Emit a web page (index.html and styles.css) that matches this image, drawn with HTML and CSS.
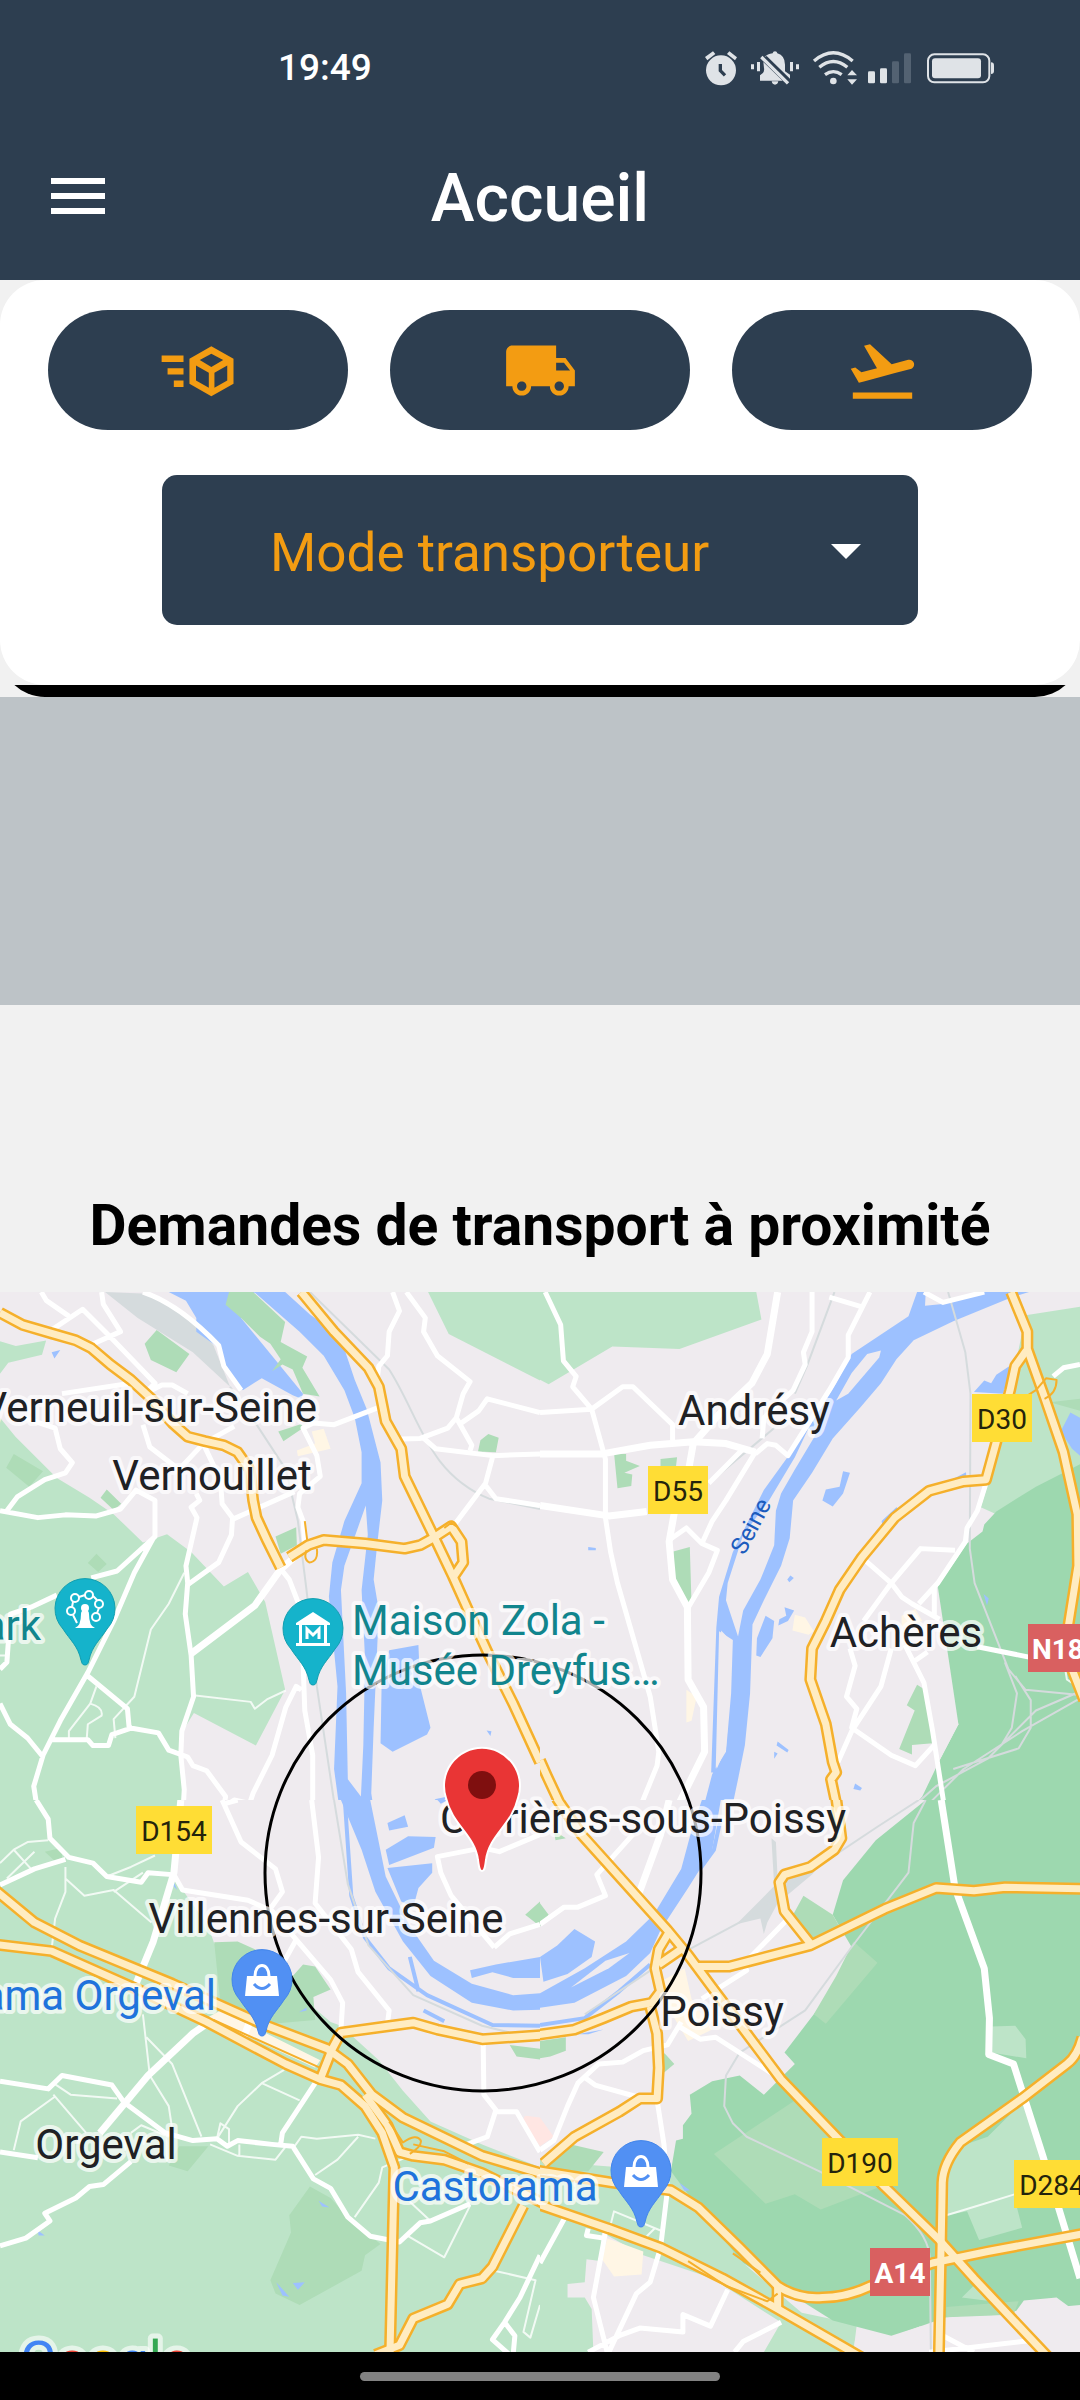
FILE: index.html
```html
<!DOCTYPE html>
<html lang="fr">
<head>
<meta charset="utf-8">
<meta name="viewport" content="width=device-width, initial-scale=1">
<title>Accueil</title>
<link rel="stylesheet" href="styles.css">
</head>
<body>
<header class="header">
  <div class="status">
    <span class="clock">19:49</span>
    <svg class="status-icons" viewBox="130 80 880 120" aria-hidden="true">
      <g class="st-fill">
        <circle cx="183" cy="147" r="45"/>
        <path d="M135 107L159 90L166 98L142 117ZM208 90L231 108L225 117L201 98Z"/>
        <path d="M273 129h9v15h-9zM291 122h9v28h-9zM390 122h9v28h-9zM408 129h9v15h-9z"/>
        <path d="M313 108Q322 98 338 96Q339 90 345 90Q351 90 352 96Q375 103 375 130V150L390 160V172L320 104ZM310 122L368 178H300V162Q315 155 312 140ZM335 180H355Q353 190 345 190Q337 190 335 180Z"/>
        <circle cx="520" cy="179" r="10"/>
        <path d="M562 162L576 146L591 162ZM562 174H591L576 190Z"/>
        <rect x="624" y="150" width="21" height="36" rx="4"/>
        <rect x="660" y="141" width="21" height="45" rx="4"/>
        <rect x="816" y="111" width="147" height="60" rx="9"/>
        <path d="M993 123Q1002 123 1002 132V149Q1002 158 993 158Z"/>
      </g>
      <g class="st-dim">
        <rect x="696" y="120" width="21" height="66" rx="4"/>
        <rect x="732" y="96" width="21" height="90" rx="4"/>
      </g>
      <path class="st-cut" d="M181 128V148L195 162"/>
      <path class="st-line" d="M304 107L384 186"/>
      <path class="st-line" d="M462 119Q520 70 578 119M478 138Q520 103 562 138M495 160Q520 142 545 160"/>
      <rect class="st-line thin" x="804" y="99" width="184" height="84" rx="19"/>
    </svg>
  </div>
  <div class="titlebar">
    <button class="menu" aria-label="Menu"><svg viewBox="0 0 54 36"><path d="M0 0H54V6H0ZM0 15H54V21H0ZM0 30H54V36H0Z"/></svg></button>
    <h1 class="title">Accueil</h1>
  </div>
</header>

<main>
  <section class="card">
    <div class="actions">
      <button class="action" aria-label="Colis"><svg viewBox="0 0 24 24"><path fill-rule="evenodd" d="M16.1 4.2L23.2 8.2V16.2L16.1 20.2L9.1 16.2V8.2ZM12.4 8.6L16.1 10.9L19.9 8.6L16.1 6.6ZM11.2 10.4V15.2L15.3 17.5V12.7ZM21.2 10.4L17.1 12.7V17.5L21.2 15.2ZM.2 7.2H7.2V9.3H.2ZM2.1 11.3H7.2V13.3H2.1ZM4.1 15.2H7.2V17.3H4.1Z"/></svg></button>
      <button class="action" aria-label="Camion"><svg viewBox="0 0 24 24"><path d="M18 18.5C18.83 18.5 19.5 17.83 19.5 17C19.5 16.17 18.83 15.5 18 15.5C17.17 15.5 16.5 16.17 16.5 17C16.5 17.83 17.17 18.5 18 18.5M19.5 9.5H17V12H21.46L19.5 9.5M6 18.5C6.83 18.5 7.5 17.83 7.5 17C7.5 16.17 6.83 15.5 6 15.5C5.17 15.5 4.5 16.17 4.5 17C4.5 17.83 5.17 18.5 6 18.5M20 8L23 12V17H21C21 18.66 19.66 20 18 20C16.34 20 15 18.66 15 17H9C9 18.66 7.66 20 6 20C4.34 20 3 18.66 3 17H1V6C1 4.89 1.89 4 3 4H17V8H20Z"/></svg></button>
      <button class="action" aria-label="Avion"><svg viewBox="0 0 24 24"><path d="M2.5,19H21.5V21H2.5V19M22.07,9.64C21.86,8.84 21.03,8.36 20.23,8.58L14.92,10L8,3.57L6.09,4.08L10.23,11.25L5.26,12.58L3.29,11.04L1.84,11.43L3.66,14.59L4.43,15.92L6.03,15.5L11.34,14.07L15.69,12.91L21,11.5C21.81,11.26 22.28,10.44 22.07,9.64Z"/></svg></button>
    </div>
    <div class="mode">
      <select class="mode-select" aria-label="Mode"><option>Mode transporteur</option></select>
      <svg class="mode-arrow" viewBox="0 0 30 15" aria-hidden="true"><path d="M0 0H30L15 15Z"/></svg>
    </div>
  </section>
  <div class="card-edge"><div class="card-edge-bar"></div></div>
  <div class="banner"></div>

  <h2 class="heading">Demandes de transport à proximité</h2>

  <svg class="map" viewBox="0 0 1080 1060" role="img" aria-label="Carte des demandes à proximité">
    <defs>
      <g id="roads-nw">
        <path d="M0 95L65 130L150 155L220 175L265 198L320 245L380 290L440 345L500 415L545 455L595 468L650 480L690 500L725 550L735 640L745 690L775 755L815 835"/>
        <path d="M875 35L970 150L1070 255L1100 310L1120 410L1165 490L1175 570L1260 745L1315 860L1360 960L1420 1090L1490 1230L1568 1400"/>
        <path d="M840 805L895 770L940 755L1060 765L1175 780L1220 770L1260 748L1310 715L1340 760L1345 820L1318 860"/>
      </g>
      <g id="roads-ne">
        <path d="M1368 35L1415 150L1415 200L1465 340L1520 500L1560 680L1562 830L1535 1000L1545 1130L1580 1220"/>
        <path d="M1412 205L1380 250L1365 320L1325 470L1295 580L1230 585L1130 612L1030 690L935 805L870 900L830 990L790 1070L785 1160L830 1290L850 1400L860 1430L845 1450L870 1568"/>
        <path d="M0 1395L20 1440L80 1568"/>
      </g>
      <g id="roads-sw">
        <path d="M-10 238L100 320L230 380L500 480L760 585L950 650L1010 690L1080 770L1170 830L1400 930L1580 978"/>
        <path d="M-10 378L150 395L400 495L600 580L830 690L930 730L990 745L1060 800L1110 870L1145 960L1140 1150L1132 1460"/>
        <path d="M930 730L965 650L990 608L1120 592L1200 582L1270 600L1400 625L1580 614"/>
        <path d="M1060 770L1125 850L1160 920L1200 930L1290 940L1400 975L1580 1055"/>
        <path d="M1520 1060L1430 1220L1400 1250L1335 1265L1300 1318L1200 1355L1160 1425L1090 1450"/>
      </g>
      <g id="roads-se">
        <path d="M48 -5L120 90L280 250L370 340L430 405L500 490L600 610L700 730L860 880L1000 1010L1160 1150L1260 1250L1480 1460"/>
        <path d="M860 -5L875 100L855 130L785 175L710 195L695 215L710 290L785 375"/>
        <path d="M455 435L550 435L785 380L1000 285L1150 230L1260 237L1350 228L1580 232"/>
        <path d="M375 345L345 390L335 440L350 500L325 530L265 540L185 570L100 600L-10 614"/>
        <path d="M410 390L345 430"/>
        <path d="M320 540L340 610L345 700L340 780L290 780L230 815L100 880L10 950"/>
        <path d="M-10 968L210 1000L380 1020L460 1065L580 1170L690 1270Q750 1305 820 1300Q890 1300 960 1270L1140 1210L1300 1180L1580 1133"/>
        <path d="M-10 1055L200 1120L350 1170L530 1250L690 1330L940 1460"/>
        <path d="M690 1270V1330"/>
        <path d="M1575 620Q1560 670 1530 690L1400 780L1220 895Q1170 950 1168 1000L1165 1150L1158 1460"/>
      </g>
      <path id="pin" d="M0 57C-3 57 -3 55 -4 52C-7 38 -15 32 -22 21A30 30 0 1 1 22 21C15 32 7 38 4 52C3 55 3 57 0 57Z"/>
      <g id="bag">
        <path class="icon-white" d="M-15 -3H15L17 17H-17Z"/>
        <path class="bag-handle" d="M-7 -3C-7 -17 7 -17 7 -3"/>
        <path class="bag-smile" d="M-8 5Q0 14 8 5"/>
      </g>
    </defs>

    <rect class="land" width="1080" height="1060"/>

    <!-- North-west -->
    <svg x="0" y="-12" width="540" height="540" viewBox="0 0 1568 1568" preserveAspectRatio="none">
      <path class="park" d="M1243 35L1303 157L1580 298V35ZM0 178L46 192L134 176L122 217L24 240L0 272ZM0 400L45 455L165 575L260 632L330 680L415 762L485 738L555 790L650 890L720 848L770 935L828 1190L743 1352L563 1257L530 1310V1568H0Z"/>
      <path class="grove" d="M455 145L550 215L512 268L438 232L420 185ZM808 440L875 418L880 430L823 468ZM800 745L860 718L862 770L815 795ZM1418 447L1448 458L1440 500L1388 498L1395 465ZM40 505L125 555L85 600L18 545ZM310 608L352 650L330 668L292 632ZM280 795L310 825L285 848L255 822Z"/>
      <path class="rail-yard" d="M305 35L430 40L560 120L620 190L668 310L560 210L400 110Z"/>
      <path class="water" d="M490 35H740L700 110L880 330L875 345L850 335L760 285L705 320L650 240L640 200L570 150V110L540 60Z"/>
      <path class="grove" d="M665 35H735L828 122L815 180L892 222L878 255L928 338L880 330L850 260L820 245L790 265L815 230L785 185L755 165L700 110L655 72Z"/>
      <path class="water" d="M738 35H828L900 100L970 150L1000 200L1030 290L1065 375L1105 530L1110 640L1095 770L1085 870L1100 960L1085 1300L1078 1490L1090 1568H990L970 1420L975 1300L980 1180L955 920L965 820L1000 700L1050 590V500L1030 400L1000 320L940 220L870 150Z"/>
      <path class="land" d="M1062 655L1068 740L1050 900L1060 1100L1055 1350L1048 1500L1010 1450L1005 1200L990 900L1000 830Z"/>
      <path class="water" d="M1130 1075L1215 1060L1220 1180L1250 1300L1240 1320L1140 1370L1105 1345L1108 1180ZM150 210L175 203L158 228ZM1413 1308L1427 1310L1424 1324ZM1262 1508L1300 1500L1280 1520Z"/>
      <path class="beige" d="M905 440L940 432L960 490L865 512L862 495L915 475Z"/>
      <path class="rail" d="M900 35L1130 260C1220 400 1240 560 1420 635L1568 665M668 310L745 420L830 550L865 700L890 900L920 1180L978 1568"/>
      <path class="lane" d="M0 1090L20 1090M555 1205L728 1225L740 1245L775 1218L830 1192M535 850L490 940L438 1015L390 1210L330 1275L335 1330M280 1180L262 1230L200 1310V1330M262 1230Q300 1240 295 1265L255 1290L252 1330"/>
      <path class="street" d="M120 35L135 60L200 105M150 145L240 85L315 160L450 300L420 330M260 190L350 150L300 70L295 35M415 35Q520 70 635 190L650 250L700 320M180 330L380 300M420 330L470 305H500L545 330M415 420L435 485L520 550L590 475L680 425M70 400L160 430L175 490L210 530L190 560L130 580L50 630L20 670M0 670L110 690L190 682L280 685L350 665L395 610L450 640V745L340 845L265 865M445 750L390 850L330 990L255 1140L175 1280L125 1380L98 1470L105 1515L140 1568M570 620L580 640L555 660L572 690L540 830L545 880L538 970L555 1090L562 1210L528 1310L525 1380L535 1480L530 1568M545 885L635 820L672 740L675 695L855 615M590 475L640 580L645 650L675 690M865 935L840 870L820 845M165 915L90 950L30 970L20 1110L0 1130M0 1230L30 1290L80 1330L125 1385M255 1150L370 1245L375 1300L460 1315L490 1365L545 1385L560 1410L600 1425L655 1500L650 1530L680 1510L725 1520L735 1490L790 1380L830 1240L860 1180L875 1190M885 770L880 700L865 660L870 620L930 570L920 510L880 430L910 415L970 420L1100 370M868 930L880 1110L885 1250L908 1380V1568M1140 35L1160 90L1130 150L1125 220L1100 250L1095 290M1180 35L1235 110L1230 150L1270 220L1365 295L1345 330L1325 400L1300 430L1220 460L1165 462M1225 455L1265 490L1430 510L1568 505M1325 400L1370 480L1365 495M1340 415L1390 380L1415 345L1568 385M1430 515L1410 590L1320 710M1405 590L1440 635L1568 655M150 1335L255 1335L270 1352H315L325 1320L385 1300"/>
      <path class="street wide" d="M895 770L815 840L740 945L555 1085"/>
      <use class="casing" href="#roads-nw"/>
      <use class="road" href="#roads-nw"/>
      <path class="ramp" d="M885 700L892 755M890 785Q880 810 898 820Q925 818 920 780M1290 720L1310 705L1325 715"/>
    </svg>

    <!-- North-east -->
    <svg x="540" y="-12" width="540" height="540" viewBox="0 0 1568 1568" preserveAspectRatio="none">
      <path class="park" d="M0 35H628L643 115L405 200L210 193L25 303L0 290ZM1410 102L1568 78V560L1325 680L1280 660L1310 560L1370 300Z"/>
      <path class="forest" d="M1568 535L1440 600L1325 672L1290 710L1285 730L1240 765L1155 890L1165 1150L1215 1290L1160 1395L1110 1500L1050 1568H1568Z"/>
      <path class="land" d="M1155 890L1215 1290L1160 1395L1130 1150Z"/>
      <path class="grove" d="M215 503L250 505V525L290 540L245 560L268 565L265 598L225 605ZM350 520L398 515L395 540H350ZM387 788L435 775L440 940L425 950L390 870ZM1095 1175L1118 1190L1140 1345L1080 1350V1378L1043 1362L1088 1250L1065 1235ZM1568 380L1480 355L1568 345Z"/>
      <path class="water" d="M1095 35H1120L1118 75L1170 70L1290 35H1420L1370 50L1200 120L1085 175L1035 230L990 300L930 370L850 460L790 560L735 640L725 750L700 830L650 930L617 1000L610 1200L595 1350L575 1450L550 1568H465L500 1435L540 1370L555 1200L560 1045L520 1020L510 1430H497L512 1010L520 920L560 790L650 610L715 520L780 430L860 300L905 215L1070 105Z"/>
      <path class="land" d="M990 205L950 215L905 270L860 350L895 330L985 225ZM780 430L740 515L665 640L590 740L545 880L540 930L575 1035L590 960L640 870L680 770L685 670L700 620L740 550L800 450ZM526 1018L552 1045V1200L540 1360L513 1420Z"/>
      <path class="water" d="M880 555L900 560L880 620L850 658L820 640L830 608L870 600ZM655 975L680 990L675 1040L640 1095L628 1090L630 1040ZM710 950L738 960L720 990L692 1003L695 985L715 975ZM1035 660L1048 670L995 720L992 700ZM1540 385L1568 400V510L1545 490L1512 440ZM1370 245L1345 330L1260 325L1290 292L1310 300L1325 275ZM727 858L737 865L724 878L718 870ZM690 1340L722 1365L718 1372L687 1352ZM680 1370L690 1375L680 1390ZM915 1462L935 1475L930 1482L910 1478ZM1195 580L1237 558L1238 575ZM140 775L162 778V785H140ZM1288 912L1303 925L1298 945Z"/>
      <path class="beige" d="M740 972L770 980L795 1020L780 1030L733 1018ZM425 1190L455 1210L440 1280L425 1285ZM1050 975L1090 955L1110 990L1050 1010Z"/>
      <path class="rail" d="M855 35L775 250L740 330M680 430L490 590M1185 35L1235 210L1250 330L1248 780L1262 880L1360 1130L1410 1190L1568 1205M1350 1110L1385 1200L1370 1300L1340 1350M1380 1150L1425 1220V1300L1390 1360L1200 1420M1568 1195L1440 1250L1300 1390L1150 1470L1040 1568M1568 1215L1400 1310L1230 1420L1120 1530"/>
      <path class="lane" d="M1525 1130L1530 1160L1545 1170"/>
      <path class="street" d="M15 35L60 130L68 235L105 280L95 310L150 375L190 520V690L205 790L225 880L320 1210L345 1370L340 1410L295 1520L280 1568M790 35V150L765 210L770 245L735 320L650 400L645 460M958 35L895 160V225L840 320L720 510L685 480L660 475L625 505M0 385L150 375L240 310H270L385 420V465M428 955L490 850L515 785L470 765L425 720L375 755M625 500L540 640L500 700L470 765M840 50L935 78M1115 35L1170 65L1290 35M945 815L1020 880L1050 920L1080 940L1160 985M1295 590L1270 670L1240 720L1235 760L1155 880L1100 940M1205 785L1105 780L1020 880L940 990M900 1070L915 1120L890 1210L920 1245L905 1300L1020 1380L1090 1410L1145 1350M865 1400L905 1310L990 1180L1020 1070M1145 890V980M1125 1080L1090 1105M1060 1060L1115 1170L1140 1310L1180 1568M1270 1065L1420 1095M1490 280L1520 255L1568 245M490 590L590 490"/>
      <path class="street wide" d="M690 35L660 215L615 300L520 390L445 475L430 560L400 620L375 760L385 870L428 950L430 1160L475 1240L478 1370L380 1568M0 505H180L320 480L445 470L540 475L625 500M0 655L200 685L310 672"/>
      <use class="casing" href="#roads-ne"/>
      <use class="road" href="#roads-ne"/>
      <path class="ramp" d="M1400 345L1440 320L1470 285L1500 290Q1500 330 1465 345"/>
    </svg>

    <!-- South-west -->
    <svg x="0" y="508" width="540" height="600" viewBox="0 0 1568 1568" preserveAspectRatio="none">
      <rect class="land" width="1568" height="1568"/>
      <path class="park" d="M0 0H530L505 190L530 235L605 330L622 375L830 480L960 580L990 590L1100 680L1170 760L1250 840L1400 900L1568 960V1568H0Z"/>
      <path class="grove" d="M622 372L690 370L740 390L830 480L880 430L915 435L960 495L910 515L915 575L790 585L640 530ZM900 1010L960 1040L1020 1100L1105 1160L1060 1190L1050 1230L870 1320L800 1290L785 1255L845 1130L840 1085ZM520 905H605L545 970L490 955ZM1480 640L1568 650V678L1500 670ZM1525 300L1568 265V330ZM130 135L180 125V150L160 160Z"/>
      <path class="water" d="M990 0H1075L1120 200L1190 330L1260 420L1370 480L1490 510L1568 505V548L1490 550L1370 530L1250 460L1170 370L1090 240L1050 130ZM1120 130L1185 95L1265 97L1260 125L1130 170ZM1125 178L1255 165V190L1215 230L1200 280L1165 265ZM1125 60L1175 40L1185 70L1130 80ZM1365 445L1440 430L1568 410V465L1490 465L1430 450L1370 465ZM500 205L515 235L503 225ZM868 555L890 542V550ZM925 1047L957 1065L935 1062ZM802 1260L840 1298L820 1295ZM850 1262L885 1260L865 1280ZM110 1125L130 1138H112ZM1270 0H1300L1280 10Z"/>
      <path class="stream" d="M1002 10L1020 250L1060 360L1130 440L1240 510L1430 588L1568 590M1190 410L1215 500M1230 550L1290 578"/>
      <path class="rail" d="M970 0L1010 220L1070 380L1200 510L1400 590L1490 610"/>
      <path class="beige" d="M600 570L640 550L930 680L915 700L700 610Z"/>
      <path class="clinic" d="M1568 830L1525 825L1515 840L1568 905Z"/>
      <path class="lane" d="M0 165L40 130L80 110L140 105M40 130L90 180M20 205L100 135M190 175V240L160 310L150 390M190 205L245 250L330 235L440 320M310 200L380 175L450 145M330 240L415 190M415 560L435 720L490 800L500 860M425 620L500 690L585 880M155 740L205 770L340 780M155 770L250 870M160 775L60 840L40 915M825 705L760 740L690 800L630 885L640 845L665 860V900M760 740L870 785M855 905L875 880L920 885L1040 875L1090 885M1040 880L980 940L915 980M610 900L690 930L800 940L830 905M695 900V930M1030 1090L1100 1000L1110 960L1190 930M1185 1140L1290 1195L1365 1060M1190 1050L1250 1100M1435 1230L1555 1255L1520 1390L1540 1405L1568 1320M380 870L410 850L490 880"/>
      <path class="street" d="M105 0L140 50L145 100L200 150L270 165L310 200L410 215L430 190L500 195M0 222L100 180L190 155M505 195L530 235L720 262L790 290L860 365L960 470L995 530L990 600M645 0L700 110L800 180L820 240L780 290M650 10L690 0M905 0L925 150L915 270L1020 390L1040 450L1130 550L1125 585M860 365L820 430M0 735L140 755L180 720L325 745L360 790L480 870L560 890L630 885L660 905L690 890L790 900L850 905L910 990L960 1015L1010 1090L1075 1140L1160 1155L1220 1105L1250 1100L1365 1055M0 920L110 935M0 1165L75 1145L145 1100L130 1080L220 1040L260 1010L300 1005L380 945M915 740L820 870L815 900M1403 630L1405 770L1440 810L1415 880L1340 905M1440 815H1500L1568 920M1435 385L1480 350L1568 325M1568 90L1450 135L1400 125L1270 148L1280 190L1310 250L1435 385M1568 1190L1510 1300L1465 1365L1430 1410L1480 1450M1465 1365L1495 1400L1490 1450"/>
      <path class="street wide" d="M525 0L505 190L445 370L395 480M600 585L560 610L430 720L290 870M725 580L705 625"/>
      <use class="casing" href="#roads-sw"/>
      <use class="road" href="#roads-sw"/>
      <path class="ramp" d="M1130 840L1170 895Q1210 870 1222 890Q1225 905 1190 925M1200 900L1290 918L1360 950M620 575L930 700"/>
    </svg>

    <!-- South-east -->
    <svg x="540" y="508" width="540" height="600" viewBox="0 0 1568 1568" preserveAspectRatio="none">
      <rect class="land" width="1568" height="1568"/>
      <path class="park" d="M0 940L90 950L380 970L470 1060L590 1210L760 1340L920 1370L910 1443H0Z"/>
      <path class="land" d="M180 1130L300 1190L500 1250L700 1365L650 1443H155L150 1330L130 1300H80V1265L130 1260L135 1200L175 1205Z"/>
      <path class="forest" d="M1120 0L975 105L880 210L850 300L915 400L830 520L795 560L710 660L740 690L650 770L580 720L500 735L435 770L440 820L415 850V885L395 890L380 970L480 1090L590 1210L690 1270L850 1360L1020 1400L1105 1375L1180 1352L1568 1320V0Z"/>
      <path class="grove" d="M730 308L765 250L850 300L875 340L800 370ZM505 925L740 785L820 850L990 1010L815 1070L740 1030L655 1055ZM910 370L980 425L830 585L795 560L860 460ZM90 900L185 920L140 970L0 970L60 920ZM0 630L75 620V655L30 670L0 675ZM345 650L365 665L390 690L350 720ZM0 270L25 300L0 330ZM1180 1325L1390 1310L1375 1345L1180 1352ZM40 80L75 100L45 105Z"/>
      <path class="park" d="M1310 592L1380 590L1410 625L1412 675L1310 660ZM1220 905L1300 880L1400 790L1470 940L1568 1090V1110L1180 1170L1175 990ZM1225 1300L1270 1260L1310 1310Z"/>
      <path class="forest" d="M1180 1085L1240 1075L1275 1150L1400 1118L1375 1030L1568 990V1140L1180 1190Z"/>
      <path class="land" d="M1180 1355L1375 1345L1405 1308L1500 1300L1568 1345V1443H910L915 1410L1025 1402L1105 1375L1115 1402H1170Z"/>
      <path class="water" d="M470 0H525L500 130L430 230L350 340L320 400L250 460L100 530L0 543V505L130 440L250 370L330 300L410 180L440 80ZM0 410L50 380L100 337L160 370L150 410L80 455L10 475ZM108 612L185 600L140 612ZM405 1000L435 1020L420 1022Z"/>
      <path class="land" d="M90 490L190 420L260 400L200 440Z"/>
      <path class="stream" d="M0 588L130 570L230 500L320 430M522 60L505 130L465 180"/>
      <path class="rail-yard" d="M850 130L790 195L690 270L660 320L650 350L640 310L570 325L680 225L672 100L685 110L690 205Z"/>
      <path class="rail" d="M1100 0L980 70L780 190L600 310L330 440L130 560M1120 0L1085 60L1070 190L900 390L770 550L580 660L540 720L535 800L560 845L600 880L810 970L1060 1085Q1130 1140 1132 1200L1135 1443"/>
      <path class="beige" d="M360 470L420 440L440 520L500 600L430 630L370 540ZM195 1145L300 1180L295 1240L215 1245L180 1200Z"/>
      <path class="clinic" d="M0 830L40 880L0 905Z"/>
      <path class="lane" d="M1180 1085L1290 1055L1380 1030M205 1110L215 1075L350 1125M310 1140L335 1118"/>
      <path class="street" d="M270 90L165 195L190 250L110 280H70L0 325M715 315L590 430L600 445L470 520M410 580L370 640L300 655L240 685L170 690L110 740L80 800L40 890L0 915M130 725L160 745L300 780M340 785L360 900L370 1020L350 1170L320 1260L280 1290L200 1443M400 590L465 625L510 620L700 730M70 1095L0 1210M190 1130L155 1300L195 1443M185 1145L135 1138L140 1120M545 1280L495 1375L415 1345V1390L290 1380L230 1400L140 1443M700 1365L590 1415L565 1443M1170 1400L1260 1443M1130 1443L1430 1412"/>
      <path class="street wide" d="M375 0L350 90L285 250M1165 0L1205 230L1290 440L1305 570L1303 665L1375 690L1460 930L1568 1250"/>
      <use class="casing" href="#roads-se"/>
      <use class="road" href="#roads-se"/>
      <path class="ramp" d="M430 1205L540 1270L660 1310L690 1290M560 1185L640 1235"/>
    </svg>

    <circle class="radius" cx="483" cy="581" r="218"/>

    <g class="place">
      <text x="317" y="130" text-anchor="end">Verneuil-sur-Seine</text>
      <text x="212" y="198" text-anchor="middle">Vernouillet</text>
      <text x="754" y="133" text-anchor="middle">Andrésy</text>
      <text x="906" y="355" text-anchor="middle">Achères</text>
      <text x="643" y="541" text-anchor="middle">Carrières-sous-Poissy</text>
      <text x="326" y="641" text-anchor="middle">Villennes-sur-Seine</text>
      <text x="722" y="734" text-anchor="middle">Poissy</text>
      <text x="106" y="867" text-anchor="middle">Orgeval</text>
    </g>
    <g class="place sight">
      <text x="41" y="348" text-anchor="end">Park</text>
      <text x="352" y="343">Maison Zola -</text>
      <text x="352" y="393">Musée Dreyfus…</text>
    </g>
    <g class="place shop">
      <text x="216" y="718" text-anchor="end">Castorama Orgeval</text>
      <text x="495" y="909" text-anchor="middle">Castorama</text>
    </g>
    <text class="river-name" text-anchor="middle" transform="translate(758 238) rotate(-62)">Seine</text>

    <g class="shield">
      <rect x="648" y="174" width="60" height="48"/><text x="678" y="209">D55</text>
      <rect x="972" y="102" width="60" height="48"/><text x="1002" y="137">D30</text>
      <rect x="136" y="514" width="76" height="48"/><text x="174" y="549">D154</text>
      <rect x="822" y="846" width="76" height="48"/><text x="860" y="881">D190</text>
      <rect x="1014" y="868" width="76" height="48"/><text x="1052" y="903">D284</text>
    </g>
    <g class="shield red">
      <rect x="1028" y="332" width="76" height="48"/><text x="1066" y="367">N184</text>
      <rect x="870" y="956" width="60" height="48"/><text x="900" y="991">A14</text>
    </g>

    <g class="pin-sight" transform="translate(85 316)">
      <use href="#pin"/>
      <path class="icon-white" d="M-10 20Q-4 18 -4 6A4 4 0 1 1 4 6Q4 18 10 20Z"/>
      <circle class="icon-white" cy="0" r="4"/>
      <g class="wheel"><circle cx="-14" cy="3" r="4"/><circle cx="-10" cy="-10" r="4"/><circle cx="4" cy="-13" r="4"/><circle cx="14" cy="-4" r="4"/><circle cx="11" cy="9" r="4"/><path d="M-13 -1L-12 -6M-6 -11L0 -13M8 -12L12 -8M14 0L12 5M-12 7L-8 15"/></g>
    </g>
    <g class="pin-sight" transform="translate(313 336)">
      <use href="#pin"/>
      <path class="icon-white" d="M0 -16L17 -5V-3H-17V-5ZM-14 -3H-11V15H-14ZM11 -3H14V15H11ZM-17 15H17V18H-17Z"/>
      <path class="museum-m" d="M-6 11V1L0 7L6 1V11"/>
    </g>
    <g class="pin-shop" transform="translate(262 687)"><use href="#pin"/><use href="#bag"/></g>
    <g class="pin-shop" transform="translate(641 878)"><use href="#pin"/><use href="#bag"/></g>

    <g transform="translate(482 493)">
      <path class="marker" d="M0 86C-3 86 -3 81 -4 75C-7 50 -30 40 -36 13A38 38 0 1 1 36 13C30 40 7 50 4 75C3 81 3 86 0 86Z"/>
      <circle class="marker-dot" r="14"/>
    </g>

    <text class="brand" x="20" y="1087"><tspan class="b">G</tspan><tspan class="r">o</tspan><tspan class="y">o</tspan><tspan class="b">g</tspan><tspan class="g">l</tspan><tspan class="r">e</tspan></text>
  </svg>
</main>

<footer class="navbar"><div class="handle"></div></footer>
</body>
</html>
```
FILE: styles.css
```css
* { box-sizing: border-box; }

body {
  margin: 0;
  background: #f1f1f1;
  color: #000;
  font-family: Roboto, "Liberation Sans", sans-serif;
}

button {
  padding: 0;
  border: 0;
  background: none;
}

/* Header */
.header {
  padding-bottom: 24px;
  background: #2d3e50;
  color: #fff;
}

.status {
  display: flex;
  align-items: center;
  justify-content: space-between;
  height: 136px;
  padding: 0 83px 0 278px;
}

.clock {
  font-size: 37px;
  font-weight: 500;
  line-height: 44px;
}

.status-icons { width: 294px; height: 40px; }
.st-fill { fill: #dfe3e7; }
.st-dim { fill: #536272; }
.st-cut { fill: none; stroke: #2d3e50; stroke-width: 10px; }
.st-line { fill: none; stroke: #dfe3e7; stroke-width: 10px; }
.st-line.thin { stroke-width: 6px; }

.titlebar {
  display: grid;
  grid-template-columns: 1fr auto 1fr;
  align-items: center;
  height: 120px;
  padding: 0 51px;
}

.menu {
  justify-self: start;
  width: 54px;
  height: 36px;
}

.menu svg { display: block; fill: #fff; }

.title {
  margin: 0;
  padding-top: 6px;
  font-size: 66px;
  font-weight: 500;
  line-height: 76px;
}

/* Mode card */
.card {
  padding: 30px 48px 60px;
  border-radius: 45px;
  background: #fff;
}

.actions {
  display: grid;
  grid-template-columns: repeat(3, 1fr);
  gap: 42px;
}

.action {
  display: flex;
  align-items: center;
  justify-content: center;
  height: 120px;
  border-radius: 60px;
  background: #2d3e50;
}

.action svg { width: 75px; height: 75px; fill: #f39c12; }

.mode {
  position: relative;
  width: 77%;
  max-width: 756px;
  margin: 45px auto 0;
}

.mode-select {
  display: block;
  width: 100%;
  height: 150px;
  padding: 6px 96px 0 108px;
  border: 0;
  border-radius: 15px;
  appearance: none;
  background: #2d3e50;
  color: #f39c12;
  font-family: inherit;
  font-size: 53px;
}

.mode-arrow {
  position: absolute;
  top: 69px;
  right: 57px;
  width: 30px;
  height: 15px;
  fill: #fff;
  pointer-events: none;
}

.card-edge {
  display: flex;
  align-items: flex-end;
  height: 12px;
  overflow: hidden;
}

.card-edge-bar {
  flex: 1 0 auto;
  height: 90px;
  border-radius: 0 0 45px 45px;
  background: #000;
}

.banner { height: 308px; background: #bdc3c7; }

.heading {
  margin: 0;
  padding: 188px 24px 33px;
  font-size: 57px;
  font-weight: 700;
  line-height: 66px;
  text-align: center;
}

/* Map */
.map { display: block; width: 100%; height: auto; }
.map path { vector-effect: non-scaling-stroke; }
.land { fill: #efebef; }
.park { fill: #bde4c8; }
.grove { fill: #aedcb7; }
.forest { fill: #9dd8af; }
.water { fill: #9dc1ff; }
.beige { fill: #fff6e5; }
.clinic { fill: #ffe6e3; }
.rail-yard { fill: #d5dbdd; }

.rail, .lane, .street, .stream, .casing, .road, .ramp {
  fill: none;
  stroke-linejoin: round;
}

.rail { stroke: #d5dbdd; stroke-width: 2px; }
.stream { stroke: #9dc1ff; stroke-width: 4px; }
.lane { stroke: #fff; stroke-width: 2px; stroke-opacity: .8; }
.street { stroke: #fff; stroke-width: 5px; }
.street.wide { stroke-width: 7px; }
.casing { stroke: #f5b02b; stroke-width: 12px; }
.road { stroke: #ffecc2; stroke-width: 7px; }
.ramp { stroke: #f5b02b; stroke-width: 2px; }

.radius { fill: none; stroke: #000; stroke-width: 3px; }

.place {
  fill: #202124;
  stroke: rgb(255 255 255 / 70%);
  stroke-width: 8px;
  stroke-linejoin: round;
  paint-order: stroke;
  font-size: 42px;
}

.sight { fill: #11858d; }
.shop { fill: #1f73dc; }
.river-name { fill: #1c5bbd; font-size: 24px; }

.shield { fill: #24240c; font-size: 28px; text-anchor: middle; }
.shield rect { fill: #ffdd35; }
.shield.red { fill: #fff; font-weight: 700; }
.shield.red rect { fill: #d96060; }

.pin-sight { fill: #15b3cb; stroke: #129eaf; stroke-width: 1px; }
.pin-shop { fill: #5190f3; stroke: #4285ea; stroke-width: 1px; }
.icon-white { fill: #fff; stroke: none; }
.bag-handle { fill: none; stroke: #fff; stroke-width: 3px; }
.bag-smile { fill: none; stroke: #5190f3; stroke-width: 3px; }
.museum-m { fill: none; stroke: #fff; stroke-width: 3px; }
.wheel { fill: none; stroke: #fff; stroke-width: 2px; }
.marker { fill: #e93535; stroke: #fff; stroke-width: 2px; }
.marker-dot { fill: #7f0f0f; }

.brand {
  stroke: rgb(255 255 255 / 60%);
  stroke-width: 10px;
  stroke-linejoin: round;
  paint-order: stroke;
  font-size: 54px;
}

.b { fill: #4285f4; }
.r { fill: #ea4335; }
.y { fill: #fbbc04; }
.g { fill: #34a853; }

/* System navigation */
.navbar {
  display: flex;
  align-items: center;
  justify-content: center;
  height: 48px;
  background: #000;
}

.handle {
  width: 360px;
  max-width: 60%;
  height: 9px;
  border-radius: 5px;
  background: #828282;
}
```
